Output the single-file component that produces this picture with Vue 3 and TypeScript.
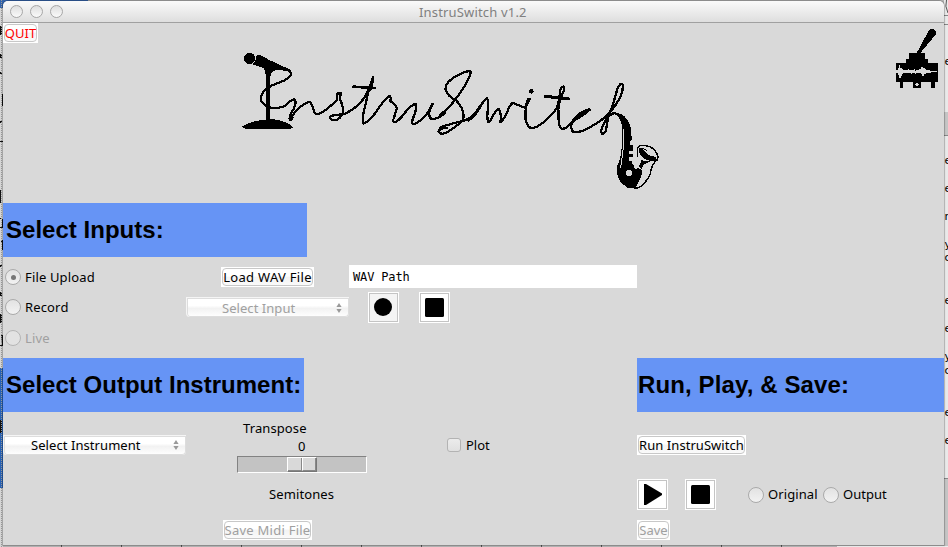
<script setup lang="ts">
import { ref } from 'vue'

const source = ref('file')
const playback = ref('')
const sources = [
  { id: 'file', label: 'File Upload', off: false },
  { id: 'record', label: 'Record', off: false },
  { id: 'live', label: 'Live', off: true },
]
const behindRight: [string, number][] = [
  ['er', 65], ['e', 164], ['e', 192], ['r', 220], ['y', 248], ['c', 261], ['e', 304],
  ['e', 332], ['y', 360], ['c', 374], ['e', 416], ['e', 444],
]
</script>

<template>
  <div class="desktop">
    <svg class="behind" width="948" height="547" aria-hidden="true">
      <rect width="948" height="547" fill="#b5b5b5" />
      <rect width="88" height="8" fill="#3565ad" />
      <rect y="8" width="3" height="539" fill="#d5d5d5" />
      <rect y="368" width="3" height="120" fill="#2862b5" />
      <path d="M0 26h2v9h-2zM2 94h1v12h-1zM0 121h2v2h-2zM0 141h3v1h-3zM0 190h1v13h-1zM0 218h2v1h-2v8h2v-8h1v9h-3zM1 240h2v10h-1v-8h-1zM0 265h2v2h-2zM0 292h2v4h-2zM0 314h2v9h-2zM1 335h2v11h-3v-1h2zM0 420h2v13h-2zM0 54h2v4h-2zM0 72h2v2h-2z" fill="#111" />
      <path d="M1.5 0V547" stroke="#999" stroke-dasharray="1 1" />
      <rect x="944" width="4" height="547" fill="#e9e9e9" />
      <path d="M944 112H948V135H944z" fill="#c5c5c5" />
      <path d="M944 15.5H948M944 24.5H948M944 135.5H948M944 478.5H948" stroke="#888" />
      <rect x="944" y="479" width="4" height="68" fill="#c4c4c4" />
      <path d="M946.5 0q-2 6 1.500 13" stroke="#555" fill="none" />
      <text v-for="[t, y] in behindRight" :key="y" x="944.500" :y="y">{{ t }}</text>
      <path d="M61.500 545v2M121.500 545v2M181.500 545v2M241.500 545v2M301.500 545v2M361.500 545v2M421.500 545v2M481.500 545v2M541.500 545v2M601.500 545v2M661.500 545v2M721.500 545v2M781.500 545v2" stroke="#555" />
      <rect x="837" y="546" width="111" height="1" fill="#eee" />
    </svg>

    <main class="window">
      <header class="titlebar">
        <i class="light" /><i class="light" /><i class="light" />
        <span class="title">InstruSwitch v1.2</span>
      </header>

      <section class="hero">
        <button class="btn quit">QUIT</button>
        <svg class="logo" width="440" height="160" viewBox="230 40 440 160" role="img" aria-label="InstruSwitch">
          <g transform="translate(230 40) scale(.33333)">
            <circle cx="59" cy="55" r="17" />
            <path d="M80 45L92 46L122 62L168 83L183 98L165 92L137 90L124 98L121 112V237H107V105L102 84L86 79L68 74L76 62Z" />
            <path d="M36 260Q60 243 106 239L112 236H120Q175 243 190 262L180 267H48Z" />
            <g class="ink">
              <path d="M165 84Q188 94 181 108Q174 118 145 129Q109 140 97 160Q87 180 99 190Q111 203 133 204Q162 204 173 190Q191 174 196 180Q200 195 183 220Q174 241 183 240Q190 236 186 229Q198 209 220 194Q239 181 244 191Q250 202 253 217Q260 230 287 210Q315 187 320 180L323 160L333 158L329 176Q342 202 338 218Q333 238 313 241Q297 239 302 229Q307 225 341 223Q385 203 405 170Q425 133 429 111Q414 150 406 196Q394 238 400 251Q421 242 435 220Q461 181 478 167Q484 169 481 183Q502 199 500 207L492 233Q485 248 499 246Q517 231 528 214Q543 195 559 191Q560 210 549 235Q541 256 557 250Q586 239 608 191Q589 224 604 237Q622 239 645 219" />
              <path d="M370 140L400 142L435 144M429 111L425 142L413 158" stroke-width="8" />
            </g>
          </g>
          <g transform="translate(440 60) scale(.33333)">
            <g class="ink">
              <path d="M0 164Q24 149 47 117Q80 75 94 36Q82 29 55 45Q13 66 17 90Q22 108 49 122Q77 151 69 180Q52 198 23 216Q2 227 -5 215Q-1 204 22 203L0 203Q12 197 60 185Q88 181 108 157Q125 129 141 114Q147 121 144 143Q140 171 144 186Q151 186 160 165Q170 147 176 147Q186 162 181 187Q192 178 201 157Q211 131 219 129L254 143Q267 125 269 117Q263 112 259 135Q255 155 257 179Q262 205 278 204Q299 201 329 170Q356 145 366 105Q376 86 371 79Q360 80 360 100Q353 133 356 171Q354 201 367 207Q380 205 393 190Q417 152 449 148Q438 161 405 180Q387 191 397 214Q420 220 445 204Q488 183 515 151Q550 107 549 76Q542 63 532 87L517 140Q504 166 495 184Q478 216 487 222Q499 220 500 196L505 171Q516 158 525 160" />
              <path d="M85 180Q105 168 122 137M315 109Q346 112 385 117M359 115L354 137M415 168L448 149" stroke-width="9" />
            </g>
            <circle cx="274" cy="94" r="7" />
            <path d="M510 158Q545 154 561 178Q575 194 575 239L569 245V256H578V273H568V281H578V292H567V303H575L578 313L590 321L606 330L604 350L591 375L585 384H571Q538 370 532 345L531 320Q544 295 546 250Q552 178 528 165Z" />
            <path d="M551 208L552 248L542 324" fill="none" stroke="#d9d9d9" stroke-width="3" />
            <path d="M593 290V265L598 257Q633 253 647 275Q657 289 652 299Q633 313 631 343Q611 380 591 384L565 382L540 363" fill="none" stroke="#000" stroke-width="4.500" />
            <path d="M597 264Q613 260 624 276L648 293L647 305L620 300Q604 294 598 278ZM603 300L621 304L635 303L613 312L604 328L596 319L602 309Z" />
            <path d="M610 268Q628 275 643 290Q624 288 610 268Z" fill="#d9d9d9" />
            <circle cx="567" cy="339" r="9" fill="#d9d9d9" /><circle cx="588" cy="320" r="7" fill="#d9d9d9" />
          </g>
        </svg>
        <svg class="emblem" width="44" height="62" viewBox="105 84 132 186" shape-rendering="crispEdges" aria-hidden="true">
          <path d="M170 159L205 94Q210 86 219 87Q229 90 228 102L223 109L181 159H195V177H204V190H234V245H224V263H213V245H183V263H159V245H129V263H120V245H108V190H138V178H148V159Z" />
          <path d="M108 210H114V204H117V195H120V204H126V207H129V210H144V207H147V210H162V207H165V213H168V210H177V207H183V201H189V204H195V207H198V210H210V213H231V216H213V219H198V222H192V228H186V222H183V219H168V222H165V219H156V222H153V219H129V222H126V228H123V234H117V225H114V219H108Z" fill="#d9d9d9" />
          <circle cx="171" cy="253" r="5" fill="#d9d9d9" />
        </svg>
      </section>

      <h2 class="banner inputs">Select Inputs:</h2>

      <section class="input-grid">
        <div class="sources">
          <label v-for="s in sources" :key="s.id" class="choice" :class="{ off: s.off }" @click="!s.off && (source = s.id)">
            <i class="radio" :class="{ on: source === s.id }" />{{ s.label }}
          </label>
        </div>
        <div class="controls">
          <div class="file-row">
            <button class="btn load">Load WAV File</button>
            <div class="entry">WAV Path</div>
          </div>
          <div class="record-row">
            <div class="menu off input-menu"><span>Select Input</span>
              <svg width="6" height="12" viewBox="0 0 6 12"><path d="M3 1L5.600 5H.4zM3 11L5.600 7H.4z" /></svg>
            </div>
            <button class="tool rec"><svg width="27" height="27"><circle cx="13" cy="13" r="9" /></svg></button>
            <button class="tool"><svg width="27" height="27"><rect x="4" y="4" width="19" height="19" rx="1.500" /></svg></button>
          </div>
        </div>
      </section>

      <div class="banners">
        <h2 class="banner output">Select Output Instrument:</h2>
        <h2 class="banner run">Run, Play, &amp; Save:</h2>
      </div>

      <section class="bottom">
        <div class="menu instrument"><span>Select Instrument</span>
          <svg width="6" height="12" viewBox="0 0 6 12"><path d="M3 1L5.600 5H.4zM3 11L5.600 7H.4z" /></svg>
        </div>
        <div class="transpose">
          <span class="t-name">Transpose</span>
          <span class="t-value">0</span>
          <div class="track"><div class="thumb"><i /><i /></div></div>
          <span class="t-unit">Semitones</span>
          <button class="btn off midi">Save Midi File</button>
        </div>
        <label class="plot"><i class="check" />Plot</label>
        <div class="run-col">
          <button class="btn run-btn">Run InstruSwitch</button>
          <div class="play-row">
            <button class="tool"><svg width="27" height="27"><path d="M5 3H7L23 12.500V14L7 24H5Z" /></svg></button>
            <button class="tool second"><svg width="27" height="27"><rect x="4" y="4" width="19" height="19" rx="1.500" /></svg></button>
            <label class="choice original" @click="playback = 'original'"><i class="radio" :class="{ on: playback === 'original' }" /><span>Original</span></label>
            <label class="choice" @click="playback = 'output'"><i class="radio" :class="{ on: playback === 'output' }" /><span>Output</span></label>
          </div>
          <button class="btn off save">Save</button>
        </div>
      </section>
    </main>
  </div>
</template>

<style>
body { margin: 0; overflow: hidden; }
</style>

<style scoped>
* { box-sizing: border-box; }
.desktop { position: relative; width: 948px; height: 547px; overflow: hidden; padding: 1px 0 0 3px; font: 13px/16px "Noto Sans", "Open Sans", sans-serif; color: #000; }
.behind { position: absolute; left: 0; top: 0; font: 11px "DejaVu Sans", sans-serif; }
.window { position: relative; width: 941px; height: 544px; background: #d9d9d9; border-radius: 5px 5px 0 0; box-shadow: 0 0 1px 1px rgba(0, 0, 0, .25); overflow: hidden; }
.titlebar { height: 22px; display: flex; align-items: center; gap: 7px; padding-left: 7px; background: linear-gradient(#fafafa, #dedede); border-bottom: 1px solid #a0a0a0; }
.light { width: 13px; height: 13px; border-radius: 50%; border: 1px solid #a6a6a6; background: linear-gradient(#dedede, #fafafa); }
.title { margin-left: 349px; color: #808080; white-space: nowrap; letter-spacing: .17px; }
.hero { height: 180px; display: flex; align-items: flex-start; }
.btn { height: 20px; padding: 0; border: 1px solid #fff; background: #fff; font: inherit; color: inherit; white-space: nowrap; position: relative; display: flex; align-items: center; justify-content: center; line-height: 16px; z-index: 0; }
.btn::before { content: ""; position: absolute; inset: 0; border: 1px solid #c8c8c8; border-radius: 4px; background: linear-gradient(#fff 45%, #f3f3f3 50%, #fafafa); z-index: -1; }
.off, .btn.off { color: #a0a0a0; }
.quit { width: 35px; color: #f00; }
.logo { margin: 17px 0 0 192px; shape-rendering: crispEdges; }
.ink { fill: none; stroke: #000; stroke-width: 6.8; stroke-linejoin: round; stroke-linecap: round; }
.emblem { margin: 5px 0 0 225px; flex: none; }
.banner { margin: 0; height: 54px; padding-left: 3px; background: #6694f5; font: bold 24px/53px "Liberation Sans", Arial, sans-serif; letter-spacing: .02px; white-space: nowrap; }
.inputs { width: 304px; }
.input-grid { height: 101px; display: flex; }
.sources { width: 183px; padding: 12px 0 0 2px; display: flex; flex-direction: column; gap: 14px; letter-spacing: .15px; }
.choice { display: flex; align-items: center; gap: 4px; height: 16px; white-space: nowrap; }
.sources .choice:last-child { margin-top: 1px; }
.radio { width: 16px; height: 16px; flex: none; border: 1px solid #aaa; border-radius: 50%; background: linear-gradient(#e2e2e2, #f2f2f2); display: flex; align-items: center; justify-content: center; }
.radio.on::after { content: ""; width: 5px; height: 5px; border-radius: 50%; background: #777; }
.off .radio { border-color: #b5b5b5; background: #e2e2e2; }
.controls { padding-top: 8px; }
.file-row { display: flex; height: 23px; padding-left: 35px; align-items: flex-start; }
.load { width: 93px; margin-top: 2px; letter-spacing: .3px; }
.entry { width: 288px; height: 23px; margin-left: 35px; padding-left: 4px; background: #fff; font: 12px/24px "DejaVu Sans Mono", monospace; letter-spacing: -.15px; }
.record-row { display: flex; margin-top: 4px; }
.menu { height: 20px; display: flex; align-items: center; position: relative; border: solid #f5f5f5; border-width: 1px 0 0 1px; background: linear-gradient(#fff 40%, #f2f2f2 55%, #fff); box-shadow: inset 0 0 0 1px #ddd; border-radius: 0 0 4px 4px; white-space: nowrap; }
.menu svg { margin-left: auto; margin-right: 7px; fill: #999; }
.input-menu { width: 163px; margin-top: 5px; padding-left: 35px; letter-spacing: .05px; }
.tool { width: 31px; height: 31px; padding: 0; border: 1px solid #fff; outline: 1px solid #c4c4c4; outline-offset: -2px; background: #fff; display: flex; align-items: center; justify-content: center; flex: none; }
.rec { margin: 0 20px 0 19px; background: #f4f4f4; }
.banners { display: flex; justify-content: space-between; }
.output { width: 301px; }
.run { width: 307px; padding-left: 1px; letter-spacing: .12px; }
.bottom { display: flex; align-items: flex-start; height: 133px; }
.instrument { width: 183px; margin-top: 23px; padding: 0 0 1px 27px; letter-spacing: .07px; }
.transpose { width: 258px; padding: 8px 0 0 37px; display: flex; flex-direction: column; align-items: flex-start; }
.t-name { margin-left: 20px; height: 18px; letter-spacing: .1px; }
.t-value { margin-left: 75px; height: 18px; }
.track { width: 130px; height: 17px; margin-left: 14px; background: #c3c3c3; border: 1px solid #828282; border-right-color: #fff; border-bottom-color: #fff; padding-left: 49px; }
.thumb { width: 30px; height: 15px; display: flex; border: 1px solid #fff; border-right-color: #777; border-bottom-color: #777; }
.thumb i { width: 14px; background: #d9d9d9; border-right: 1px solid #888; border-bottom: 1px solid #888; }
.thumb i + i { border-left: 1px solid #fff; }
.t-unit { margin: 13px 0 1px 46px; height: 16px; letter-spacing: .1px; }
.midi { width: 89px; margin-top: 17px; letter-spacing: .25px; }
.plot { width: 193px; margin-top: 25px; padding-left: 3px; display: flex; align-items: center; gap: 5px; }
.check { width: 14px; height: 14px; border: 1px solid #b3b3b3; border-radius: 3px; background: linear-gradient(#ececec, #e0e0e0); }
.run-col { padding-top: 23px; }
.run-btn { width: 109px; letter-spacing: .05px; }
.play-row { display: flex; margin-top: 24px; align-items: center; }
.play-row span { padding-bottom: 2px; }
.second { margin-left: 17px; }
.original { margin: 0 5px 0 32px; width: 70px; letter-spacing: .1px; }
.save { width: 33px; margin-top: 10px; }
</style>
